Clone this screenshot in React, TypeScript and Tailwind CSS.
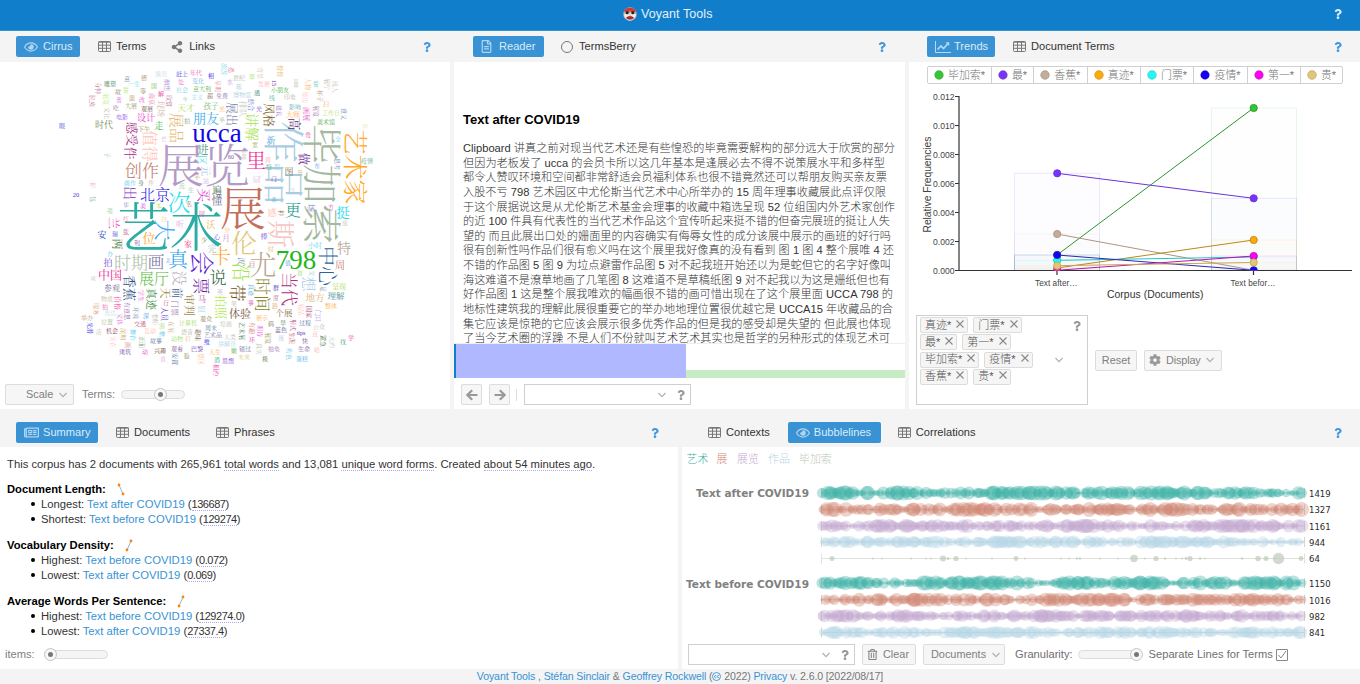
import React from "react";
import { FaRegEye, FaShareAlt, FaRegFileAlt, FaQuestion, FaCog, FaRegNewspaper, FaRegTrashAlt } from "react-icons/fa";

type Word = [string, number, number, number, string, number?];

const WORDS: Word[] = [
  ["展览", 204, 165, 46, "#b39bc8"], ["艺术", 170, 228, 53, "#2bada3"], ["展", 243, 208, 46, "#c46f5c"],
  ["作品", 283, 163, 42, "#a9cde2", 1], ["毕加索", 321, 184, 40, "#a3b8a0", 1], ["艺术家", 355, 167, 25, "#ffa81f", 1],
  ["ucca", 217, 132, 27, "#1508e8"], ["798", 296, 259, 27, "#1fb51f"], ["次", 179, 203, 23, "#1fdcf5"],
  ["大", 165, 230, 21, "#3ba5f5", 1], ["真", 178, 260, 20, "#2e9df0"], ["会", 202, 263, 24, "#5c22d8", 1],
  ["伦", 244, 244, 26, "#dfc878"], ["卡", 221, 257, 20, "#ffa526"], ["斯", 280, 234, 28, "#f6c3c0", 1],
  ["尤", 263, 265, 27, "#bba790"], ["里", 256, 161, 20, "#f5178f"], ["展品", 176, 128, 15, "#e3b263", 1],
  ["值得", 150, 146, 16, "#ffc1b3", 1], ["创作", 142, 171, 17, "#bd7e6b"], ["北京", 155, 195, 15, "#2717e8"],
  ["朋友", 206, 118, 13, "#43adeb"], ["讲解", 252, 127, 14, "#a5e048", 1], ["风格", 268, 115, 12, "#80662c", 1],
  ["展出", 231, 114, 12, "#7882ad", 1], ["高", 295, 124, 13, "#5a2c70", 1], ["感受", 131, 134, 12, "#a32a83", 1],
  ["件", 131, 153, 13, "#a32a83", 1], ["出", 130, 193, 14, "#7a25b9", 1], ["买", 204, 195, 14, "#dc2dc4", 1],
  ["懂", 217, 201, 11, "#777095"], ["遍", 217, 190, 10, "#3c6949"], ["进", 203, 150, 11, "#38937a"],
  ["区", 202, 160, 10, "#59d5e9", 1], ["元", 206, 171, 10, "#a5c7df", 1], ["做", 303, 159, 12, "#733399", 1],
  ["更", 293, 210, 16, "#149687"], ["挺", 343, 212, 13, "#22dced"], ["位", 149, 238, 13, "#ffa32f"],
  ["时期", 131, 263, 17, "#abc0a9"], ["画", 156, 262, 17, "#75709d"], ["展厅", 154, 279, 15, "#57bd3c"],
  ["中国", 110, 276, 12, "#ef188f"], ["香蕉", 130, 288, 13, "#345589", 1], ["没", 179, 278, 15, "#b4a9bd", 1],
  ["票", 201, 286, 17, "#711ea6", 1], ["说", 218, 278, 17, "#2b6138"], ["真迹", 151, 299, 11, "#418747", 1],
  ["天", 165, 293, 11, "#8e8637", 1], ["前", 177, 293, 11, "#416490", 1], ["门票", 175, 308, 8, "#a177ad", 1],
  ["审判", 189, 305, 11, "#a08b51", 1], ["中心", 327, 266, 20, "#2a649b", 1], ["特", 344, 248, 14, "#ad9b88"],
  ["周", 340, 265, 10, "#ce7d6d"], ["沿", 241, 272, 19, "#a0e541", 1], ["时间", 262, 295, 17, "#858225", 1],
  ["带", 237, 293, 17, "#755320", 1], ["当代", 289, 289, 17, "#ad2c85", 1], ["想", 308, 284, 15, "#a6cce4", 1],
  ["地方", 315, 298, 9.5, "#ddb271"], ["理解", 336, 296, 8.5, "#528f95"], ["呈现", 339, 286, 7, "#a7dd4d"],
  ["拍照", 220, 307, 12, "#b5e957", 1], ["体验", 240, 314, 11, "#78583d"], ["个展", 284, 313, 8.5, "#87633b"],
  ["新", 271, 141, 9, "#409ede"], ["时代", 104, 125, 9, "#7c8752"], ["设计", 146, 118, 9, "#eb44cf"],
  ["走", 159, 126, 9, "#43b43c"], ["安", 102, 235, 9, "#2644bb"], ["两", 117, 244, 11, "#507d45", 1],
  ["兰", 113, 223, 12, "#e630a1", 1], ["拍", 108, 263, 9, "#7950d9"], ["家", 188, 244, 8, "#ef4588"],
  ["完", 212, 249, 9, "#a9b8b5"], ["参观", 112, 288, 8, "#7c749d"], ["月", 226, 238, 8, "#c793d1"],
  ["棒", 264, 236, 7, "#7151db"], ["小时", 315, 245, 7, "#66d9f0"], ["马", 202, 299, 8, "#c14a9c"],
  ["图", 289, 172, 9, "#88785e"], ["加", 257, 179, 8, "#ddacdf", 1], ["感", 272, 213, 9, "#ffb6b1"],
  ["场", 311, 208, 8, "#6e72ac", 1], ["种", 281, 213, 6, "#a1744b", 1], ["贵", 308, 135, 6, "#f24ba7"],
  ["门", 274, 179, 5.5, "#76319d"], ["久", 293, 190, 5, "#a4cbe1"], ["品", 274, 199, 5, "#56a4c3"],
  ["疫情", 367, 161, 6, "#69ab91"], ["天才", 186, 108, 8.5, "#b7e163"], ["孩子", 211, 106, 7.5, "#7cb56a"],
  ["意大利", 202, 89, 6, "#58b24c"], ["年代", 196, 73, 6, "#ee63b1"], ["赶上", 182, 74, 6, "#4650e0"],
  ["相", 211, 76, 6, "#3b20f0"], ["变化", 198, 81, 6, "#76b9e8"], ["处", 181, 82, 6, "#ea6ccd"],
  ["社会", 182, 90, 6, "#89d5e8"], ["主义", 197, 97, 6, "#83d9ec"], ["超", 210, 96, 6, "#876951"],
  ["演员", 161, 74, 6, "#c5d9e4"], ["德", 144, 78, 6, "#b58b50"], ["意", 127, 79, 6, "#618bb1"],
  ["雕塑", 110, 84, 6, "#57956c"], ["分钟", 98, 88, 6, "#a74b74", 1], ["民族", 92, 101, 6, "#c56991", 1],
  ["一生", 134, 84, 6, "#6ee1f5"], ["爱", 126, 90, 6, "#b4e260"], ["细想", 167, 85, 6, "#9f8bd8", 1],
  ["国", 154, 86, 6, "#80bf67"], ["等", 143, 91, 6, "#98886a"], ["解", 161, 94, 6, "#eb3399"],
  ["故", 118, 92, 6, "#88815b"], ["展览", 106, 99, 6, "#b9ec72", 1], ["普", 119, 100, 6, "#dc73e4"],
  ["面", 132, 98, 6, "#ae9869"], ["改", 142, 100, 6, "#e852bf"], ["南京", 152, 99, 6, "#ef7bac", 1],
  ["欣赏", 169, 101, 6, "#b65887", 1], ["少", 185, 99, 5, "#5aa99c"], ["吃", 116, 108, 6, "#957fa6"],
  ["大展", 131, 106, 6, "#92975c"], ["观展", 147, 109, 6, "#765249"], ["现场", 161, 109, 8, "#ccb3a4", 1],
  ["文化", 107, 113, 6, "#beb6a4", 1], ["电影", 122, 117, 6, "#9b58ed"], ["拍", 187, 121, 6, "#6ba391"],
  ["眼", 62, 126, 6, "#4d55e4"], ["下午", 144, 129, 6, "#a58549"], ["长", 164, 139, 6, "#d7bee0"],
  ["子", 107, 155, 6, "#8ccb8d", 1], ["20", 76, 195, 6.5, "#4133e6"], ["你", 93, 185, 6, "#efb3bc", 1],
  ["包", 93, 199, 6, "#739f79", 1], ["画作", 130, 183, 6, "#6bcff1"], ["近", 182, 186, 6, "#8bcb7f"],
  ["生", 191, 190, 6, "#9ac6b9"], ["名", 189, 204, 5.5, "#936b48"], ["华", 126, 205, 6, "#8893bb"],
  ["美", 143, 206, 6, "#d05ae3"], ["亮", 110, 211, 6, "#7fca83"], ["红", 126, 219, 6, "#db8189"],
  ["身", 141, 183, 6, "#75917c"], ["件", 151, 183, 6, "#cbc0a4"], ["手", 197, 177, 6, "#db8f86"],
  ["站", 206, 181, 6, "#ccaed5"], ["回", 202, 214, 6, "#ef3ca0"], ["本", 159, 206, 6, "#c9dc56"],
  ["旅游", 224, 69, 6, "#75cfe5", 1], ["恐", 231, 70, 6, "#d45189", 1], ["世纪", 239, 78, 6, "#b6b6a4"],
  ["背景", 260, 73, 6, "#d9cabc", 1], ["慢慢", 280, 71, 6, "#e9bc79", 1], ["草", 252, 77, 6, "#aae25c"],
  ["早期", 218, 86, 6, "#dc7c8b", 1], ["水", 230, 82, 6, "#bb8bd8"], ["陈", 239, 87, 6, "#a8cadf"],
  ["发展", 264, 84, 6, "#ffafb3"], ["15", 274, 83, 6, "#6021b0", 1], ["小朋友", 280, 90, 6, "#50b84c"],
  ["100", 296, 83, 6, "#adb999", 1], ["人物", 308, 84, 6, "#fab767", 1], ["爱", 316, 84, 6, "#5fc2bb"],
  ["展厅", 327, 84, 6, "#bfb1a7", 1], ["成人", 335, 87, 6, "#beb9b2", 1], ["博物馆", 242, 95, 6, "#abcfe4"],
  ["免费", 222, 96, 6, "#9085ad"], ["通", 257, 93, 6, "#488970"], ["线", 272, 98, 6, "#5abaa4"],
  ["印象", 290, 97, 6, "#c1b7aa"], ["周边", 305, 97, 6, "#ffc0bf", 1], ["杯子", 320, 96, 6, "#b89b86", 1],
  ["扫", 326, 104, 6, "#ffaf55"], ["影响", 295, 107, 6, "#6bb8c5"], ["大师", 293, 114, 7, "#ffae53"],
  ["建议", 279, 111, 6, "#a06bc8", 1], ["画展", 307, 114, 7, "#ed42bf", 1], ["展览", 316, 111, 6, "#a172a1", 1],
  ["工作日", 331, 113, 6, "#b8e36d"], ["意义", 344, 114, 6, "#6679b1", 1], ["美术馆", 326, 122, 6, "#59a851"],
  ["排队", 243, 109, 8, "#c0cbb9", 1], ["结合", 251, 105, 6, "#686de2", 1], ["光", 259, 109, 6, "#7754cf"],
  ["光", 222, 109, 6, "#ffb466"], ["半", 222, 120, 6, "#a8a86d"], ["宽", 255, 145, 6, "#98a961"],
  ["60", 231, 157, 6, "#7e559e"], ["100", 244, 155, 6, "#b7bba6", 1], ["特", 269, 167, 6, "#67b293"],
  ["型", 277, 167, 6, "#a5cbe8"], ["荷", 268, 160, 6, "#f5b1b6"], ["开", 300, 173, 6, "#d3ad7b"],
  ["布", 317, 166, 6, "#77aae2"], ["思考", 337, 164, 6, "#808cc4", 1], ["全", 338, 139, 6, "#72d3e7"],
  ["方", 331, 207, 6, "#e54db8"], ["成", 345, 223, 6, "#cfbeb0"], ["心", 217, 237, 6, "#6945df"],
  ["分", 227, 230, 6, "#f9ae67"], ["时", 271, 249, 6, "#e5b965"], ["目", 252, 264, 7, "#c18498"],
  ["波", 242, 261, 7, "#7089ac", 1], ["值", 288, 263, 6, "#62aae7"], ["首", 300, 273, 6, "#a5dc62"],
  ["变", 312, 273, 6, "#a6cee1", 1], ["足", 323, 289, 6, "#6c8da2", 1], ["真迹", 251, 290, 6, "#65b7e3", 1],
  ["群", 276, 288, 6, "#5141ce"], ["度", 276, 298, 6, "#c0708e"], ["路", 275, 306, 6, "#ddb980"],
  ["笑", 234, 304, 6, "#c2b6a2"], ["事", 251, 303, 6, "#ef4fc3"], ["英", 220, 292, 6, "#bfafdb"],
  ["瑞", 115, 234, 6, "#566ad2"], ["张", 126, 232, 6, "#af3578"], ["利", 137, 243, 6, "#8b609b"],
  ["办", 110, 254, 6, "#6fc9e9"], ["北", 168, 260, 5, "#62adf2"], ["少", 204, 240, 6, "#69844a"],
  ["听", 180, 224, 8, "#eba6e3"], ["沃", 211, 225, 9, "#f3b451"],
  ["白", 164, 219, 6, "#f5c76a"], ["词", 93, 278, 5, "#b8c8b0"], ["物质", 107, 299, 6, "#c5baa5"],
  ["价格", 118, 303, 7, "#f64ba5", 1], ["拍", 105, 307, 6, "#e55f9b"], ["服务", 96, 309, 6, "#de946d", 1],
  ["学生", 141, 296, 6, "#eb66d8", 1], ["有意思", 127, 311, 6, "#9364ae", 1], ["环境", 136, 313, 6, "#91a1b6", 1],
  ["表达", 110, 313, 6, "#aee4ec"], ["深", 146, 316, 6, "#44a6ed"], ["老师", 155, 319, 6, "#bbb5ad", 1],
  ["举办", 87, 318, 6, "#cd9a7f"], ["文体", 120, 319, 6, "#e76ae6", 1], ["人员", 165, 314, 7, "#5634d4", 1],
  ["行", 166, 303, 6, "#dd639b"], ["银", 202, 309, 7, "#a8cfe4", 1], ["位置", 107, 322, 6, "#bac6a1"],
  ["交通", 140, 324, 6, "#b85376"], ["光滑", 90, 328, 6, "#4c40ed", 1], ["店", 99, 332, 6, "#bec4a0"],
  ["机会", 112, 331, 6, "#92405f"], ["深圳", 123, 334, 6, "#d1b069", 1], ["舞台", 133, 335, 6, "#48cbef", 1],
  ["互动", 150, 331, 6, "#ffb4b1"], ["浪", 162, 326, 6, "#9bd852"], ["绅", 162, 334, 6, "#46c0e4"],
  ["布展", 171, 327, 6, "#cfb18b", 1], ["计算机", 188, 323, 6, "#a8dc66"], ["观众", 206, 319, 6, "#8a8156"],
  ["周末", 211, 328, 6, "#6083ac"], ["语音", 187, 332, 6, "#bab59f"], ["趣味", 198, 335, 6, "#77563e", 1],
  ["艺术品", 213, 335, 6, "#7f7cae"], ["动物", 177, 339, 6, "#a4db67"], ["灯", 188, 339, 6, "#dec35e"],
  ["故事", 156, 341, 6, "#5679a4"], ["实在", 113, 342, 6, "#ffc0b8", 1], ["画", 128, 345, 6, "#cc7265", 1],
  ["正面", 142, 342, 6, "#76a381", 1], ["建筑", 125, 352, 6, "#7853b2"], ["动", 145, 352, 6, "#ee38b7"],
  ["兴趣", 160, 351, 6, "#75513a"], ["观看", 177, 349, 6, "#805aa1"], ["巴黎", 197, 349, 6, "#7042b3"],
  ["维", 207, 342, 6, "#3a34ef"], ["人生", 215, 352, 6, "#ffb253"], ["安置", 175, 359, 6, "#4a7b9d", 1],
  ["脸", 187, 356, 6, "#91875b"], ["景区", 201, 359, 6, "#ffb873", 1], ["相约", 216, 370, 6, "#ef48b5", 1],
  ["首", 163, 359, 6, "#dbb5e6"], ["酒", 217, 360, 6, "#46b99b"], ["展示", 262, 318, 6, "#ffad57"],
  ["绘画", 226, 324, 6, "#c2cab7"], ["艺术展", 242, 331, 6, "#4a7957", 1], ["有趣", 252, 328, 6, "#d76e69", 1],
  ["期待", 260, 331, 6, "#eb52df", 1], ["环", 252, 340, 6, "#ed3bbd"], ["码", 271, 324, 6, "#766137"],
  ["早", 283, 323, 6, "#518c51"], ["形式", 293, 325, 6, "#b2457b", 1], ["蓝色", 281, 330, 6, "#665a91"],
  ["过程", 305, 323, 6, "#5e79a7"], ["公众", 319, 327, 6, "#c1baae"], ["tips", 301, 333, 6, "#5828c0"],
  ["展览", 268, 338, 6, "#949554", 1], ["生涯", 292, 338, 6, "#b8526d", 1], ["迷", 281, 338, 6, "#adcfea"],
  ["快", 305, 341, 6, "#7b559c"], ["点", 315, 334, 6, "#ffb0ac"], ["紧急", 323, 341, 6, "#4c7247", 1],
  ["大约", 332, 342, 6, "#c2c5bb", 1], ["找", 343, 342, 6, "#54ac8a"], ["学", 351, 338, 6, "#ec3ca5"],
  ["人类", 230, 337, 6, "#bec2b8"], ["讲解员", 227, 344, 6, "#abd5ea"], ["错过", 245, 349, 6, "#6c7499"],
  ["真实", 259, 349, 6, "#bbc5aa", 1], ["抽象", 274, 349, 6, "#b084ba"], ["生命", 304, 349, 6, "#8063ac"],
  ["粉色", 289, 354, 6, "#79c6ed", 1], ["哈", 317, 350, 6, "#ffb3ab"], ["未来", 244, 357, 6, "#ddc984"],
  ["极", 265, 359, 6, "#587a45"], ["思想", 228, 361, 6, "#8449d0"], ["蛋糕", 302, 359, 6, "#67bced"],
  ["嫩", 234, 351, 6, "#62b654"], ["整体", 331, 306, 6, "#ffb04e"], ["展品", 301, 309, 6, "#ffc6c1", 1],
  ["国家", 309, 312, 6, "#b04872", 1], ["门口", 318, 316, 6, "#7859dd", 1], ["前", 366, 126, 5, "#eed7b0", 1],
];

const Cloud = () => (
  <svg width="450" height="315" viewBox="0 62 450 315" className="block shrink-0" fontFamily='"Liberation Serif", "Noto Serif CJK SC", "Noto Sans CJK SC", serif' textAnchor="middle">
    {WORDS.map(([t, x, y, s, c, r], i) => (
      <text key={i} fontSize={s} fill={c} fontWeight={s < 14 ? 400 : 300} transform={`translate(${x} ${y})${r ? " rotate(90)" : ""}`} dy={s * 0.36}>{t}</text>
    ))}
  </svg>
);

const rng = (seed: number) => {
  let s = seed;
  return () => {
    s = (s * 16807) % 2147483647;
    return s / 2147483647;
  };
};

const LINES: [number, string, number, string][] = [
  [493, "#3cb1a6", 7.6, "1419"], [509.5, "#d08672", 7.4, "1327"], [526, "#c3a6d0", 7, "1161"], [542, "#b5d5e7", 6.6, "944"],
  [583, "#3cb1a6", 7.6, "1150"], [599.7, "#d08672", 7, "1016"], [616, "#c3a6d0", 6.8, "982"], [632.5, "#b5d5e7", 6.4, "841"],
];
const SPARSE = [[832, 2.5], [873, 1], [882, 1], [911, 1], [926, 1], [931, 1], [943, 3], [948, 1.5], [956, 2.6], [966, 1], [992, 1], [1016, 2.4], [1025, 1], [1061, 1], [1069, 1], [1077, 1.2], [1080, 1.2], [1100, 1], [1118, 1], [1134, 3.8], [1145, 1], [1156, 2.6], [1165, 1.2], [1176, 1], [1182, 1], [1186, 1.4], [1190, 2.6], [1200, 1.3], [1205, 1], [1242, 1.3], [1258, 2.7], [1266, 2.5], [1278.5, 5.7], [1301, 2.4]];

const Bubbles = () => (
  <svg width="678" height="192" viewBox="682 447 678 192" className="block shrink-0">
    <g fontFamily='"Noto Sans CJK SC", sans-serif' fontSize="10.9" fontWeight="300">
      <text x="686.5" y="463" fill="#3cb1a6">艺术</text>
      <text x="716.5" y="463" fill="#d08672">展</text>
      <text x="737" y="463" fill="#c3a6d0">展览</text>
      <text x="768" y="463" fill="#b5d5e7">作品</text>
      <text x="799" y="463" fill="#bccab9">毕加索</text>
    </g>
    <g fontFamily='"DejaVu Sans", sans-serif' fontSize="10.2" fontWeight="700" fill="#808080">
      <text x="696" y="497" textLength="113" lengthAdjust="spacingAndGlyphs">Text after COVID19</text>
      <text x="686" y="587.5" textLength="123" lengthAdjust="spacingAndGlyphs">Text before COVID19</text>
    </g>
    {LINES.map(([y, c, max, n], k) => {
      const r = rng(977 * (k + 3));
      return (
        <g key={k}>
          <path d={`M821.5 ${y}H1304.5M821.5 ${y - 5}v10M1304.5 ${y - 5}v10`} stroke="#d5d5d5" fill="none" />
          {Array.from({ length: 210 }, (_, i) => {
            const x = 822 + i * 2.29 + r() * 2;
            const wave = 0.66 + 0.1 * Math.sin(i / 11 + k * 2) + 0.08 * Math.sin(i / 4.7 + k);
            const rad = Math.max(1.5, Math.min(max, max * (wave + (r() - 0.5) * 0.75)));
            return <circle key={i} cx={x} cy={y} r={rad} fill={c} fillOpacity="0.36" />;
          })}
          <text x="1309" y={y + 3.8} fontFamily='"DejaVu Sans", sans-serif' fontSize="9.2" fontWeight="400" fill="#2a2a2a" textLength={n.length * 5.4} lengthAdjust="spacingAndGlyphs">{n}</text>
        </g>
      );
    })}
    <path d="M821.5 558.5H1304.5M821.5 553.5v10M1304.5 553.5v10" stroke="#dfe2dd" fill="none" />
    {SPARSE.map(([x, r], i) => <circle key={i} cx={x} cy="558.5" r={r} fill="#bccab9" fillOpacity="0.7" />)}
    <text x="1309" y="562.3" fontFamily='"DejaVu Sans", sans-serif' fontSize="9.2" fontWeight="400" fill="#2a2a2a" textLength="10.8" lengthAdjust="spacingAndGlyphs">64</text>
  </svg>
);

const SERIES: [string, string, string, number, number, number][] = [
  ["毕加索*", "#32c832", "#2d962d", 255, 108, 32], ["最*", "#7a33ff", "#6a35d8", 173.3, 198.3, 42],
  ["香蕉*", "#c3ad98", "#aa9683", 234, 270.3, 53.5], ["真迹*", "#ffaa00", "#be8718", 268, 240, 53.5],
  ["门票*", "#20f8f8", "#20c7c0", 260.3, 257, 53], ["疫情*", "#1500f8", "#2b25b8", 255, 270.3, 54],
  ["第一*", "#ff00f5", "#bd12b5", 270.3, 256, 53], ["贵*", "#e2c676", "#c5a94e", 265.7, 262.5, 42],
];

const Chart = () => (
  <svg width="451" height="225" viewBox="909 84 451 225" className="block shrink-0" fontFamily='"Liberation Sans", sans-serif'>
    <g strokeWidth="1" fillOpacity="0.013" strokeOpacity="0.12">
      {SERIES.map(([n, c, , a, b]) => (
        <g key={n} fill={c} stroke={c}>
          <rect x="1014.5" y={a} width="85" height={270.5 - a} />
          <rect x="1211.5" y={b} width="85" height={270.5 - b} />
        </g>
      ))}
    </g>
    <path d="M959 96V271M958 270.5H1352M955 96.5h4M955 125.5h4M955 154.5h4M955 183.5h4M955 212.5h4M955 241.5h4M955 270.5h4M1057 271v4M1253.5 271v4" stroke="#333" strokeWidth="1.2" fill="none" />
    {["0.012", "0.010", "0.008", "0.006", "0.004", "0.002", "0.000"].map((t, i) => (
      <text key={t} x="933" y={99.5 + i * 29} fontSize="8.6" fill="#444" textLength="21.5">{t}</text>
    ))}
    <text transform="translate(931 232.5) rotate(-90)" fontSize="10.4" fill="#444" textLength="96">Relative Frequencies</text>
    <text x="1035" y="285.5" fontSize="8.2" fill="#444" textLength="42.5">Text after…</text>
    <text x="1230.5" y="285.5" fontSize="8.2" fill="#444" textLength="45">Text befor…</text>
    <text x="1107" y="298" fontSize="10.4" fill="#333" textLength="96.5">Corpus (Documents)</text>
    <clipPath id="plot"><rect x="959" y="90" width="400" height="180.5" /></clipPath>
    <g clipPath="url(#plot)">
      {SERIES.map(([n, , s, a, b]) => <path key={n} d={`M1057 ${a}L1253.5 ${b}`} stroke={s} strokeWidth="1" />)}
      {SERIES.map(([n, c, s, a, b]) => (
        <g key={n} fill={c} stroke={s} strokeWidth="0.9">
          <circle cx="1057.2" cy={a} r="3.6" />
          <circle cx="1253.7" cy={b} r="3.6" />
        </g>
      ))}
    </g>
  </svg>
);

const READER = [
  "Clipboard 讲真之前对现当代艺术还是有些惶恐的毕竟需要解构的部分远大于欣赏的部分",
  "但因为老板发了 ucca 的会员卡所以这几年基本是逢展必去不得不说策展水平和多样型",
  "都令人赞叹环境和空间都非常舒适会员福利体系也很不错竟然还可以帮朋友购买亲友票",
  "入股不亏 798 艺术园区中尤伦斯当代艺术中心所举办的 15 周年理事收藏展此点评仅限",
  "于这个展据说这是从尤伦斯艺术基金会理事的收藏中箱选呈现 52 位组国内外艺术家创作",
  "的近 100 件具有代表性的当代艺术作品这个宜传听起来挺不错的但奋完展班的挺让人失",
  "望的 而且此展出口处的姗面里的内容确实有侮辱女性的成分该展中展示的画班的好行吗",
  "很有创新性吗作品们很有愈义吗在这个展里我好像真的没有看到 图 1 图 4 整个展唯 4 还",
  "不错的作品图 5 图 9 为垃点避雷作品图 5 对不起我班开始还以为是蛇但它的名字好像叫",
  "海这难道不是潦草地画了几笔图 8 这难道不是草稿纸图 9 对不起我以为这是姗纸但也有",
  "好作品图 1 这是整个展我唯欢的幅画很不错的画可惜出现在了这个展里面 UCCA 798 的",
  "地标性建筑我的理解此展很重要它的举办地地理位置很优越它是 UCCA15 年收藏品的合",
  "集它应该是惊艳的它应该会展示很多优秀作品的但是我的感受却是失望的 但此展也体现",
  "了当今艺术圈的浮躁 不是人们不份就叫艺术艺术其实也是哲学的另种形式的体现艺术可",
];
const READER_WIDTHS = [432, 422, 424, 423, 432, 427, 428, 431, 428, 427, 430, 430, 428, 427];

const Grid = () => (
  <svg width="13" height="11" viewBox="0 0 13 11" className="shrink-0" fill="none" stroke="#777">
    <rect x="0.5" y="0.5" width="12" height="10" rx="1" />
    <path d="M0.5 1.2h12M0.5 4.2h12M0.5 7.3h12M4.5 1v9M8.5 1v9" />
  </svg>
);
const TrendIcon = () => (
  <svg width="16" height="12" viewBox="0 0 16 12" fill="none" stroke="currentColor" strokeWidth="1" className="opacity-80">
    <path d="M0.5 0v11.5H16" /><path d="M2.5 8.5 6 5l2.5 2.5 4.5-5" strokeWidth="1.6" /><path d="M10.5 1.3h3.7V5z" fill="currentColor" stroke="none" />
  </svg>
);
const Chevron = ({ className = "" }: { className?: string }) => (
  <svg width="8" height="6" viewBox="0 0 8 6" className={`shrink-0 ${className}`} fill="none" stroke="#b0b0b0" strokeWidth="1.2"><path d="M.5 1 4 4.6 7.500 1" /></svg>
);
const Arrow = ({ right }: { right?: boolean }) => (
  <svg width="12" height="12" viewBox="0 0 12 12" fill="none" stroke="#999" strokeWidth="2.2">
    <path d={right ? "M.5 6H10M5.800 1.200 10.600 6 5.800 10.800" : "M11.500 6H2M6.200 1.200 1.400 6 6.200 10.800"} />
  </svg>
);

const Tab = ({ icon, label, active, className = "" }: { icon: React.ReactNode; label: string; active?: boolean; className?: string }) => (
  <div className={`flex h-[21px] shrink-0 items-center whitespace-nowrap rounded-xs text-[11.1px] ${active ? "bg-[#3892d4] text-[#d9ecf9]" : "text-[#333]"} ${className}`}>
    {icon}
    <span>{label}</span>
  </div>
);
const Help = ({ className = "text-[#4598dc]" }: { className?: string }) => <FaQuestion size={10} className={`shrink-0 ${className}`} />;

const Button = ({ children, className = "" }: { children: React.ReactNode; className?: string }) => (
  <div className={`flex h-[21px] shrink-0 items-center rounded-xs border border-[#dcdcdc] bg-[#f6f6f6] text-[10.9px] text-[#808080] ${className}`}>{children}</div>
);
const Slider = ({ knob }: { knob: string }) => (
  <div className="flex h-[9px] w-[64px] shrink-0 items-center rounded-full border border-[#dcdcdc] bg-[#f5f5f5]">
    <div className={`flex size-[13px] shrink-0 items-center justify-center rounded-full border border-[#c5c5c5] bg-[#f7f7f7] ${knob}`}>
      <div className="size-[5px] rounded-full bg-[#777]" />
    </div>
  </div>
);
const Combo = ({ className }: { className: string }) => (
  <div className={`flex h-[21px] shrink-0 items-center justify-end border border-[#cfcfcf] bg-white pr-[4px] ${className}`}>
    <Chevron className="mr-[10px]" />
    <Help className="text-[#999]" />
  </div>
);
const Spark = ({ up }: { up?: boolean }) => (
  <svg width="8" height="13" viewBox="0 0 8 13" className="ml-[11px]">
    <path d={up ? "M2 11 6 2" : "M2 2 6 11"} stroke="#8bb9dd" />
    <circle cx="2" cy={up ? 11 : 2} r="1.4" fill="#ff8400" />
    <circle cx="6" cy={up ? 2 : 11} r="1.4" fill="#ff8400" />
  </svg>
);
const U = ({ children, className = "" }: { children: React.ReactNode; className?: string }) => <span className={`border-b border-dotted border-[#b0a8f5] ${className}`}>{children}</span>;

const Section = ({ title, up, rows }: { title: string; up?: boolean; rows: [string, string, string][] }) => (
  <div className="mb-[12px]">
    <div className="-mb-px flex h-[15px] items-center text-[11.2px] font-bold text-black">{title}<Spark up={up} /></div>
    {rows.map(([a, b, c]) => (
      <div key={a} className="flex h-[15px] items-center pl-6 text-[11.25px] leading-[12px]">
        <i className="mr-[6px] block size-1 rounded-full bg-black" />
        <span className="whitespace-pre">{a}: <span className="text-[#3892d4]">{b}</span> (<U className="text-[11px] tracking-[-0.45px]">{c}</U>)</span>
      </div>
    ))}
  </div>
);

const Tag = ({ t }: { t: string }) => (
  <div className="flex h-[16px] items-center gap-[5px] rounded-xs border border-[#dcdcdc] bg-[#f5f5f5] pl-[4px] pr-[3px] text-[11px] leading-none text-[#555]">
    <span>{t}</span>
    <svg width="8" height="8" viewBox="0 0 8 8" className="mb-[3px]" stroke="#888" strokeWidth="1.1"><path d="M.5.5l7 7M7.500.5l-7 7" /></svg>
  </div>
);

export default function App() {
  return (
    <div className="flex h-[684px] w-[1360px] flex-col overflow-hidden bg-[#f4f4f4] font-['Liberation_Sans','Noto_Sans_CJK_SC',sans-serif] font-light text-[#333]">
      <header className="flex h-[31px] shrink-0 items-center border-b border-[#3892d4] bg-[#117ecc] pb-[2px] text-[#e5f1fb]">
        <svg width="16" height="16" viewBox="0 0 16 16" className="ml-[622px] mr-[3px]">
          <circle cx="8" cy="8" r="6.8" fill="#b9b3ad" />
          <path d="M1.800 5C3.500.5 12.500.5 14.200 5L11.5 7 8 5.2 4.5 7Z" fill="#c93f37" />
          <path d="M2 8.5 5 7l3 2 3-2 3 1.5C13.5 12 11 14.5 8 14.5S2.500 12 2 8.500Z" fill="#f2eeea" />
          <path d="M4 11.500 8 9.500l4 2C11 14.500 5 14.500 4 11.500Z" fill="#a72e2c" />
          <circle cx="5.200" cy="6.800" r="1.500" fill="#222" /><circle cx="10.800" cy="6.800" r="1.500" fill="#222" />
          <path d="M6.800 7h2.400L8 11Z" fill="#e8ded6" />
        </svg>
        <span className="text-[12.5px] tracking-[0.07px]">Voyant Tools</span>
        <Help className="ml-auto mr-[17px] text-[#d7eafa]" />
      </header>

      <div className="flex h-[378px] shrink-0 gap-1">
        <section className="flex w-[450px] flex-col">
          <div className="flex h-[31px] shrink-0 items-center pl-4">
            <Tab active className="w-16 gap-[5px] pl-2" icon={<FaRegEye size={14} className="opacity-75" />} label="Cirrus" />
            <Tab className="ml-[18px] gap-[5px]" icon={<Grid />} label="Terms" />
            <Tab className="ml-[25px] gap-[6px]" icon={<FaShareAlt size={12} className="text-[#777]" />} label="Links" />
            <Help className="ml-auto mr-[18px] text-[#4598dc]" />
          </div>
          <div className="flex grow flex-col bg-white">
            <Cloud />
            <div className="flex items-center pl-[5px] pt-[7px]">
              <Button className="w-[69px] gap-[6px] pl-[20px]"><span>Scale</span><Chevron /></Button>
              <span className="ml-2 mr-[6px] text-[11px] text-[#808080]">Terms:</span>
              <Slider knob="ml-[32px]" />
            </div>
          </div>
        </section>

        <section className="flex w-[451px] flex-col">
          <div className="flex h-[31px] shrink-0 items-center pl-[18px]">
            <Tab active className="ml-px w-[71px] gap-[7px] pl-[8px]" icon={<FaRegFileAlt size={13} className="w-[11px] opacity-75" />} label="Reader" />
            <Tab
              className="ml-[17px] gap-[6px]"
              icon={<svg width="12" height="12" fill="none" stroke="#777"><circle cx="6" cy="6" r="5.500" /></svg>}
              label="TermsBerry"
            />
            <Help className="ml-auto mr-[18px] text-[#4598dc]" />
          </div>
          <div className="flex grow flex-col bg-white">
            <div className="h-[281px] shrink-0 overflow-hidden pl-[9px] pt-[49px]">
              <h2 className="mb-[12px] text-[13px] font-bold leading-[18px] text-black">Text after COVID19</h2>
              {READER.map((l, i) => (
                <div key={i} style={{ width: READER_WIDTHS[i] }} className="h-[14.63px] whitespace-nowrap text-[11.15px] leading-[14.63px] [text-align-last:justify]">{l}</div>
              ))}
            </div>
            <div className="flex h-[35px] shrink-0 items-end border-t border-[#eee]">
              <div className="h-full w-[232px] border-l-2 border-[#117ecc] bg-[#b0b9ff]" />
              <div className="h-[8px] grow bg-[#c7ecc3]" />
            </div>
            <div className="flex items-center pl-[7px] pt-[6px]">
              <Button className="w-[21px] justify-center"><Arrow /></Button>
              <Button className="ml-[7px] w-[21px] justify-center"><Arrow right /></Button>
              <i className="ml-[6px] mr-[7px] h-3 w-px bg-[#ddd]" />
              <Combo className="w-[167px]" />
            </div>
          </div>
        </section>

        <section className="flex w-[451px] flex-col">
          <div className="flex h-[31px] shrink-0 items-center pl-[18px]">
            <Tab active className="w-[68px] gap-[3px] pl-2" icon={<TrendIcon />} label="Trends" />
            <Tab className="ml-[18px] gap-[5px]" icon={<Grid />} label="Document Terms" />
            <Help className="ml-auto mr-[17px] text-[#4598dc]" />
          </div>
          <div className="flex grow flex-col bg-white">
            <div className="ml-[18px] mt-1 flex h-[18px] w-[416px] shrink-0 rounded-xs border border-[#d0d0d0] text-[10.9px] text-[#777]">
              {SERIES.map(([n, c], i) => (
                <div key={n} style={{ width: [64, 42, 53.5, 53.5, 53, 54, 53, 41][i] }} className="flex shrink-0 items-center justify-center gap-[4px] whitespace-nowrap border-r border-[#d0d0d0] leading-none last:border-r-0">
                  <svg width="10" height="10"><circle cx="5" cy="5" r="4.400" fill={c} stroke="#00000044" strokeWidth="0.600" /></svg>
                  <span>{n}</span>
                </div>
              ))}
            </div>
            <Chart />
            <div className="flex items-center pl-[7px] pt-[6px]">
              <div className="flex h-[90px] w-[172px] shrink-0 border border-[#cfcfcf] pl-[3px] pt-px">
                <div className="flex w-[135px] flex-col gap-[1.300px]">
                  {[["真迹*", "门票*"], ["最*", "第一*"], ["毕加索*", "疫情*"], ["香蕉*", "贵*"]].map((r) => (
                    <div key={r[0]} className="flex gap-[5px]">{r.map((t) => <Tag key={t} t={t} />)}</div>
                  ))}
                </div>
                <Chevron className="mt-[40px]" />
                <Help className="ml-[9px] mt-[4px] text-[#999]" />
              </div>
              <Button className="ml-[7px] w-[42px] justify-center">Reset</Button>
              <Button className="ml-[7px] w-[78px] gap-[5px] pl-[4px]"><FaCog size={12} className="text-[#999]" /><span className="tracking-[-0.15px]">Display</span><Chevron /></Button>
            </div>
          </div>
        </section>
      </div>

      <div className="flex h-[260px] shrink-0 gap-1">
        <section className="flex w-[678px] flex-col">
          <div className="flex h-[38px] shrink-0 items-center pl-4 pt-[9px]">
            <Tab active className="w-[82px] gap-[4px] pl-[8px]" icon={<FaRegNewspaper size={15} className="opacity-75" />} label="Summary" />
            <Tab className="ml-[18px] gap-[5px]" icon={<Grid />} label="Documents" />
            <Tab className="ml-[26px] gap-[5px]" icon={<Grid />} label="Phrases" />
            <Help className="ml-auto mr-[18px] text-[#4598dc]" />
          </div>
          <div className="grow bg-white pl-[7px] pt-[9px]">
            <div className="mb-[11px] flex h-[15px] items-center whitespace-pre text-[11.280px] leading-[12px]">
              <span>This corpus has 2 documents with 265,961 <U>total words</U> and 13,081 <U>unique word forms</U>. Created <U>about 54 minutes ago</U>.</span>
            </div>
            <Section title="Document Length:" rows={[["Longest", "Text after COVID19", "136687"], ["Shortest", "Text before COVID19", "129274"]]} />
            <Section title="Vocabulary Density:" up rows={[["Highest", "Text before COVID19", "0.072"], ["Lowest", "Text after COVID19", "0.069"]]} />
            <Section title="Average Words Per Sentence:" up rows={[["Highest", "Text before COVID19", "129274.0"], ["Lowest", "Text after COVID19", "27337.4"]]} />
            <div className="-ml-[2px] -mt-[4px] flex h-[16px] items-center text-[11.100px] text-[#808080]"><span className="mr-[9px]">items:</span><Slider knob="-ml-px" /></div>
          </div>
        </section>

        <section className="flex w-[678px] flex-col">
          <div className="flex h-[38px] shrink-0 items-center pl-[26px] pt-[9px]">
            <Tab className="gap-[5px]" icon={<Grid />} label="Contexts" />
            <Tab active className="ml-[18px] w-[93px] gap-[4px] pl-2" icon={<FaRegEye size={14} className="opacity-75" />} label="Bubblelines" />
            <Tab className="ml-[17px] gap-[5px]" icon={<Grid />} label="Correlations" />
            <Help className="ml-auto mr-[17px] text-[#4598dc]" />
          </div>
          <div className="flex grow flex-col bg-white">
            <Bubbles />
            <div className="flex items-center whitespace-nowrap pl-[6px] pt-[5px] text-[11.150px] text-[#707070]">
              <Combo className="w-[167px]" />
              <Button className="ml-[7px] w-[54px] gap-[5px] pl-[4px]"><FaRegTrashAlt size={11} /><span>Clear</span></Button>
              <Button className="ml-[7px] w-[82px] gap-[6px] pl-[7px]"><span>Documents</span><Chevron /></Button>
              <span className="ml-[10px] mr-[5px]">Granularity:</span>
              <Slider knob="ml-[51px]" />
              <span className="ml-[7px] mr-[3px]">Separate Lines for Terms</span>
              <svg width="12" height="12" viewBox="0 0 12 12" fill="none" stroke="#888"><path d="M.5.5h11v11H.5zM2.500 6l2.500 3 5-7" /></svg>
            </div>
          </div>
        </section>
      </div>

      <footer className="flex h-[15px] shrink-0 items-center justify-center whitespace-pre text-[10.600px] leading-none tracking-[-0.13px] text-[#777]">
        <span><span className="text-[#3892d4]">Voyant Tools</span> , <span className="text-[#3892d4]">Stéfan Sinclair</span> &amp; <span className="text-[#3892d4]">Geoffrey Rockwell</span> (</span>
        <svg width="9" height="9" viewBox="0 0 9 9" fill="none" stroke="#3892d4" strokeWidth="0.9">
          <circle cx="4.500" cy="4.500" r="4" /><path d="M4.200 3.600a1.100 1.100 0 1 0 0 1.800M7 3.600a1.100 1.100 0 1 0 0 1.800" />
        </svg>
        <span> 2022) <span className="text-[#3892d4]">Privacy</span> v. 2.6.0 [2022/08/17]</span>
      </footer>
    </div>
  );
}
